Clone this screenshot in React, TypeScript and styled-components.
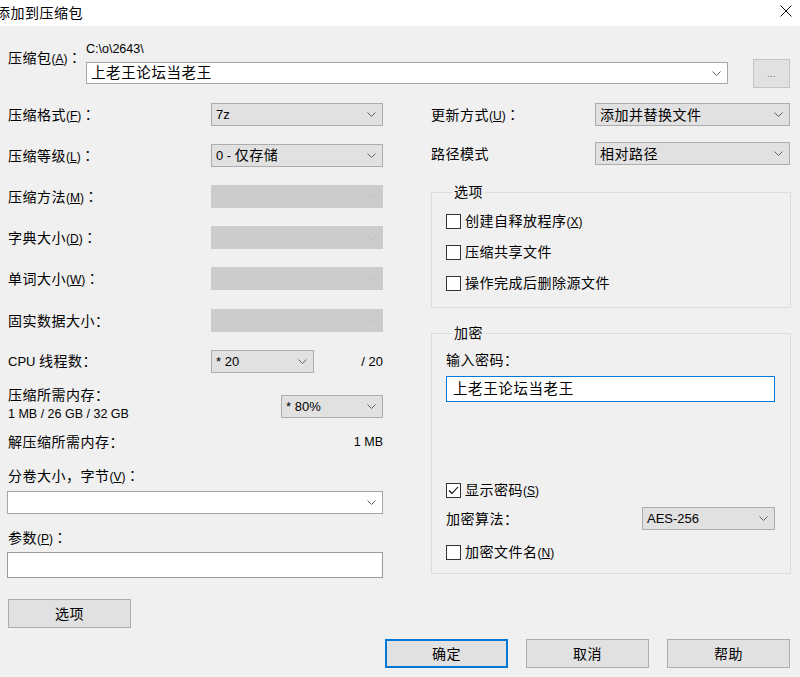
import React from "react";
import styled, { createGlobalStyle } from "styled-components";

const GlobalStyle = createGlobalStyle`
  html, body { margin: 0; padding: 0; background: #f0f0f0; }
  #root { width: 800px; height: 677px; }
  *, *::before, *::after { box-sizing: border-box; }
`;

const FONT = `"Liberation Sans", "Noto Sans CJK SC", sans-serif`;

const Window = styled.div`
  width: 800px;
  height: 677px;
  overflow: hidden;
  background: #f0f0f0;
  font-family: ${FONT};
  font-size: 14px;
  letter-spacing: 0.5px;
  line-height: 18px;
  color: #000;
  display: flex;
  flex-direction: column;
`;

const TitleBar = styled.div`
  height: 26px;
  flex: none;
  background: #fff;
  display: flex;
  align-items: center;
  justify-content: space-between;
  padding-right: 8px;
`;

const Title = styled.span`
  margin-left: -4px;
`;

const CloseIcon = styled.svg`
  width: 12px;
  height: 12px;
  margin-bottom: 4px;
`;

const Body = styled.div`
  padding: 14px 9px 0 7px;
  display: flex;
  flex-direction: column;
`;

const TopRow = styled.div`
  display: flex;
  align-items: flex-start;
`;

const ArchiveLabel = styled.div`
  width: 79px;
  padding-left: 1px;
  margin-top: 8px;
  white-space: nowrap;
`;

const ArchiveField = styled.div`
  width: 642px;
  display: flex;
  flex-direction: column;
`;

const PathText = styled.div`
  font-size: 12.5px;
  letter-spacing: 0;
  line-height: 18px;
`;

const Columns = styled.div`
  display: grid;
  grid-template-columns: 376px 360px;
  column-gap: 48px;
  margin-top: 15px;
  align-items: start;
`;

const Column = styled.div`
  display: flex;
  flex-direction: column;
`;

const FieldRow = styled.div<{ $mt?: number; $h?: number }>`
  display: flex;
  align-items: center;
  justify-content: space-between;
  height: ${(p) => p.$h ?? 23}px;
  margin-top: ${(p) => p.$mt ?? 0}px;
`;

const Label = styled.span<{ $pl?: number }>`
  padding-left: ${(p) => p.$pl ?? 1}px;
  white-space: nowrap;
`;

const Latin = styled.span<{ $size?: number }>`
  font-size: ${(p) => p.$size ?? 13}px;
  letter-spacing: 0;
`;

const Mn = styled.span`
  font-size: 12px;
  letter-spacing: 0;
  u {
    text-decoration: underline;
    text-underline-offset: 1px;
  }
`;

const CenteredColon = styled.span`
  font-family: "Noto Sans CJK TC", "Noto Sans CJK SC", sans-serif;
  letter-spacing: 0;
`;

type ComboKind = "normal" | "disabled" | "editable";

const ComboBox = styled.div<{ $w?: number; $h?: number; $kind?: ComboKind; $mt?: number; $mr?: number }>`
  flex: none;
  width: ${(p) => (p.$w ? `${p.$w}px` : "100%")};
  height: ${(p) => p.$h ?? 23}px;
  margin-top: ${(p) => p.$mt ?? 0}px;
  margin-right: ${(p) => p.$mr ?? 0}px;
  display: flex;
  align-items: center;
  justify-content: space-between;
  padding: 0 6px 0 4px;
  border: 1px solid
    ${(p) => (p.$kind === "disabled" ? "#cccccc" : p.$kind === "editable" ? "#a6a6a6" : "#adadad")};
  background: ${(p) => (p.$kind === "disabled" ? "#cccccc" : p.$kind === "editable" ? "#ffffff" : "#e1e1e1")};
  color: ${(p) => (p.$kind === "disabled" ? "#bfbfbf" : "#606060")};
`;

const ComboText = styled.span<{ $cjk?: boolean }>`
  color: #000;
  font-size: ${(p) => (p.$cjk ? 14 : 13)}px;
  letter-spacing: ${(p) => (p.$cjk ? 0.5 : 0)}px;
  white-space: nowrap;
`;

const BigText = styled.span`
  color: #000;
  font-size: 14.5px;
  letter-spacing: 0.6px;
`;

const TextInput = styled.div<{ $w?: number; $mt?: number; $focus?: boolean }>`
  width: ${(p) => (p.$w ? `${p.$w}px` : "100%")};
  height: 26px;
  margin-top: ${(p) => p.$mt ?? 0}px;
  background: #fff;
  border: 1px solid ${(p) => (p.$focus ? "#0078d7" : "#9a9a9a")};
  display: flex;
  align-items: center;
  padding-left: 6px;
`;

const Button = styled.div<{ $w: number; $h?: number; $mt?: number; $ml?: number; $default?: boolean; $muted?: boolean }>`
  flex: none;
  width: ${(p) => p.$w}px;
  height: ${(p) => p.$h ?? 29}px;
  margin-top: ${(p) => p.$mt ?? 0}px;
  margin-left: ${(p) => p.$ml ?? 0}px;
  background: #e1e1e1;
  border: ${(p) => (p.$default ? "2px solid #0078d7" : p.$muted ? "1px solid #c4c4c4" : "1px solid #adadad")};
  color: ${(p) => (p.$muted ? "#7a7a7a" : "#000")};
  display: flex;
  align-items: center;
  justify-content: center;
`;

const CpuGroup = styled.div`
  width: 172px;
  display: flex;
  align-items: center;
  justify-content: space-between;
`;

const MemoryRow = styled.div`
  display: flex;
  justify-content: space-between;
  align-items: flex-start;
  margin-top: 13px;
`;

const MemoryLabel = styled.div`
  display: flex;
  flex-direction: column;
  padding-left: 1px;
  line-height: 19px;
`;

const Group = styled.fieldset<{ $mt: number; $pb: number }>`
  margin: ${(p) => p.$mt}px 0 0 0;
  padding: 0 15px ${(p) => p.$pb}px 14px;
  border: 1px solid #dcdcdc;
  min-width: 0;
  display: flex;
  flex-direction: column;
`;

const Legend = styled.legend`
  padding: 0 2px;
  margin-left: 6px;
  line-height: 18px;
`;

const CheckRow = styled.div<{ $mt?: number }>`
  display: flex;
  align-items: center;
  gap: 4px;
  height: 20px;
  margin-top: ${(p) => p.$mt ?? 0}px;
`;

const Box = styled.span`
  width: 15px;
  height: 15px;
  border: 1px solid #333;
  background: #fff;
  display: flex;
  align-items: center;
  justify-content: center;
`;

const ButtonRow = styled.div`
  display: flex;
  justify-content: flex-end;
  gap: 18px;
  margin-top: 11px;
  margin-right: 1px;
`;

const Chevron: React.FC = () => (
  <svg width="9" height="5" viewBox="0 0 9 5">
    <path d="M0.5 0.5 L4.5 4.5 L8.5 0.5" fill="none" stroke="currentColor" strokeWidth="1" />
  </svg>
);

const Check: React.FC<{ checked?: boolean }> = ({ checked }) => (
  <Box>
    {checked && (
      <svg width="13" height="13" viewBox="0 0 13 13">
        <path d="M2 6.5 L5 9.5 L11 3" fill="none" stroke="#000" strokeWidth="1.1" />
      </svg>
    )}
  </Box>
);

const M: React.FC<{ k: string; colon?: boolean }> = ({ k, colon }) => (
  <>
    <Mn>
      (<u>{k}</u>)
    </Mn>
    {colon && <CenteredColon>：</CenteredColon>}
  </>
);

const Combo: React.FC<{
  w?: number;
  h?: number;
  kind?: ComboKind;
  mt?: number;
  mr?: number;
  children?: React.ReactNode;
}> = ({ w, h, kind, mt, mr, children }) => (
  <ComboBox $w={w} $h={h} $kind={kind} $mt={mt} $mr={mr}>
    <span>{children}</span>
    <Chevron />
  </ComboBox>
);

export default function App() {
  return (
    <>
      <GlobalStyle />
      <Window>
        <TitleBar>
          <Title>添加到压缩包</Title>
          <CloseIcon viewBox="0 0 12 12">
            <path d="M0.5 0.5 L11.5 11.5 M11.5 0.5 L0.5 11.5" stroke="#111" strokeWidth="1" fill="none" />
          </CloseIcon>
        </TitleBar>
        <Body>
          <TopRow>
            <ArchiveLabel>
              压缩包<M k="A" colon />
            </ArchiveLabel>
            <ArchiveField>
              <PathText>C:\o\2643\</PathText>
              <Combo kind="editable" h={22} mt={4}>
                <BigText>上老王论坛当老王</BigText>
              </Combo>
            </ArchiveField>
            <Button $w={37} $mt={19} $ml={25} $muted>
              <Latin $size={10}>...</Latin>
            </Button>
          </TopRow>

          <Columns>
            <Column>
              <FieldRow>
                <Label>
                  压缩格式<M k="F" colon />
                </Label>
                <Combo w={172}>
                  <ComboText>7z</ComboText>
                </Combo>
              </FieldRow>
              <FieldRow $mt={18}>
                <Label>
                  压缩等级<M k="L" colon />
                </Label>
                <Combo w={172}>
                  <ComboText $cjk>
                    <Latin>0 - </Latin>仅存储
                  </ComboText>
                </Combo>
              </FieldRow>
              <FieldRow $mt={18}>
                <Label>
                  压缩方法<M k="M" colon />
                </Label>
                <Combo w={172} kind="disabled" />
              </FieldRow>
              <FieldRow $mt={18}>
                <Label>
                  字典大小<M k="D" colon />
                </Label>
                <Combo w={172} kind="disabled" />
              </FieldRow>
              <FieldRow $mt={18}>
                <Label>
                  单词大小<M k="W" colon />
                </Label>
                <Combo w={172} kind="disabled" />
              </FieldRow>
              <FieldRow $mt={19}>
                <Label>固实数据大小：</Label>
                <Combo w={172} kind="disabled" />
              </FieldRow>
              <FieldRow $mt={18}>
                <Label>
                  <Latin>CPU </Latin>线程数：
                </Label>
                <CpuGroup>
                  <Combo w={103}>
                    <ComboText>* 20</ComboText>
                  </Combo>
                  <Latin>/ 20</Latin>
                </CpuGroup>
              </FieldRow>
              <MemoryRow>
                <MemoryLabel>
                  <span>压缩所需内存：</span>
                  <Latin $size={12.5}>1 MB / 26 GB / 32 GB</Latin>
                </MemoryLabel>
                <Combo w={102} mt={9}>
                  <ComboText>* 80%</ComboText>
                </Combo>
              </MemoryRow>
              <FieldRow $mt={9} $h={18}>
                <Label>解压缩所需内存：</Label>
                <Latin $size={12.5}>1 MB</Latin>
              </FieldRow>
              <FieldRow $mt={16} $h={18}>
                <Label>
                  分卷大小，字节<M k="V" colon />
                </Label>
              </FieldRow>
              <Combo kind="editable" mt={6} />
              <FieldRow $mt={15} $h={18}>
                <Label>
                  参数<M k="P" colon />
                </Label>
              </FieldRow>
              <TextInput $mt={5} />
              <Button $w={123} $mt={21} $ml={1}>
                选项
              </Button>
            </Column>

            <Column>
              <FieldRow>
                <Label $pl={0}>
                  更新方式<M k="U" colon />
                </Label>
                <Combo w={195} mr={1}>
                  <ComboText $cjk>添加并替换文件</ComboText>
                </Combo>
              </FieldRow>
              <FieldRow $mt={16}>
                <Label $pl={0}>路径模式</Label>
                <Combo w={195} mr={1}>
                  <ComboText $cjk>相对路径</ComboText>
                </Combo>
              </FieldRow>

              <Group $mt={18} $pb={14}>
                <Legend>选项</Legend>
                <CheckRow $mt={10}>
                  <Check />
                  <span>
                    创建自释放程序<M k="X" />
                  </span>
                </CheckRow>
                <CheckRow $mt={11}>
                  <Check />
                  <span>压缩共享文件</span>
                </CheckRow>
                <CheckRow $mt={11}>
                  <Check />
                  <span>操作完成后删除源文件</span>
                </CheckRow>
              </Group>

              <Group $mt={16} $pb={11}>
                <Legend>加密</Legend>
                <FieldRow $mt={9} $h={18}>
                  <Label $pl={0}>输入密码：</Label>
                </FieldRow>
                <TextInput $mt={7} $focus>
                  <BigText>上老王论坛当老王</BigText>
                </TextInput>
                <CheckRow $mt={78}>
                  <Check checked />
                  <span>
                    显示密码<M k="S" />
                  </span>
                </CheckRow>
                <FieldRow $mt={7}>
                  <Label $pl={0}>加密算法：</Label>
                  <Combo w={133}>
                    <ComboText>AES-256</ComboText>
                  </Combo>
                </FieldRow>
                <CheckRow $mt={12}>
                  <Check />
                  <span>
                    加密文件名<M k="N" />
                  </span>
                </CheckRow>
              </Group>
            </Column>
          </Columns>

          <ButtonRow>
            <Button $w={123} $default>
              确定
            </Button>
            <Button $w={123}>取消</Button>
            <Button $w={123}>帮助</Button>
          </ButtonRow>
        </Body>
      </Window>
    </>
  );
}
